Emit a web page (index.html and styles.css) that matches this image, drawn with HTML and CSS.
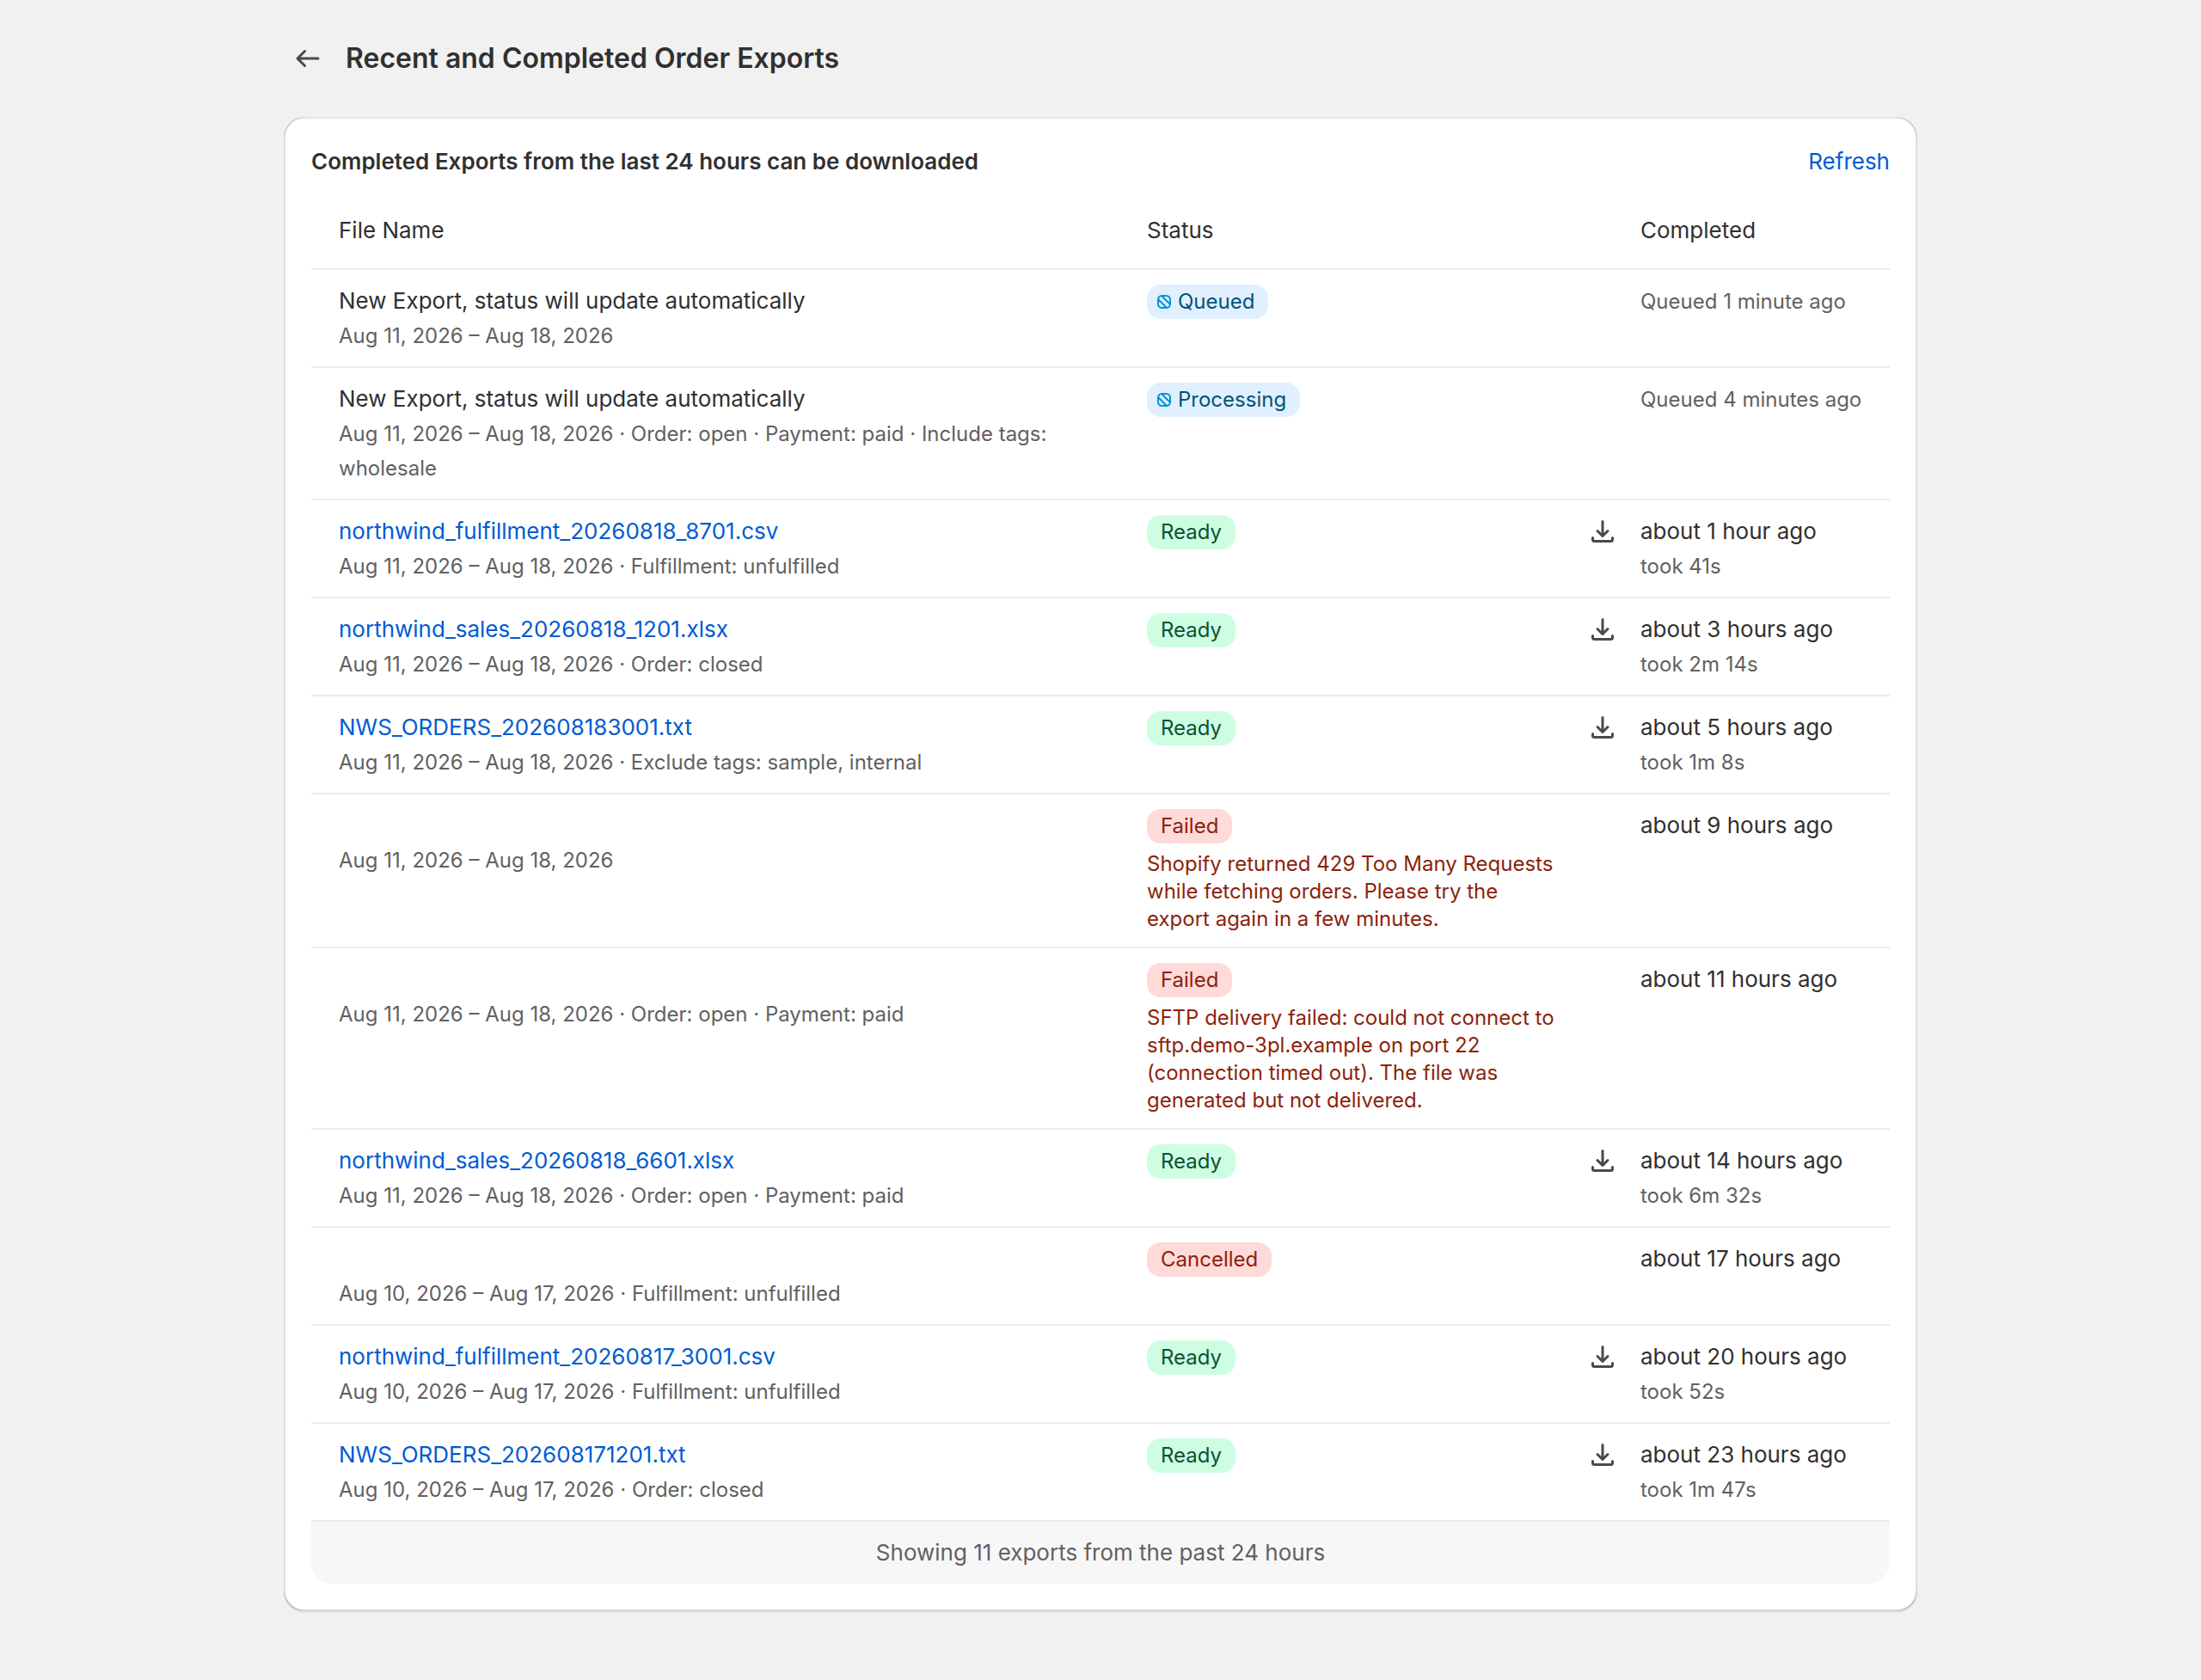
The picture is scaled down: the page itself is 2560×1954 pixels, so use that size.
FILE: index.html
```html
<!DOCTYPE html>
<html lang="en">
<head>
<meta charset="utf-8">
<meta name="viewport" content="width=device-width, initial-scale=1">
<title>Recent and Completed Order Exports</title>
<link rel="stylesheet" href="styles.css">
</head>
<body>
<svg class="sprite" aria-hidden="true">
  <symbol id="icon-download" viewBox="0 0 20 20">
    <path d="M10 4.25v8.25M7 9.75l3 3 3-3M4.25 13.75v1c0 .55.45 1 1 1h9.5c.55 0 1-.45 1-1v-1"/>
  </symbol>
  <symbol id="icon-progress" viewBox="0 0 16 16">
    <rect x="1" y="1" width="14" height="14" rx="4.5"/>
    <path d="M1.5 5.5l9 9M5.5 1.5l9 9"/>
  </symbol>
</svg>
<main class="page">
  <header class="page-header">
    <a class="back" href="#" aria-label="Back">
      <svg viewBox="0 0 20 20" aria-hidden="true"><path d="M16 10H4.5M8.25 5.75 4 10l4.25 4.25"/></svg>
    </a>
    <h1 class="page-title">Recent and Completed Order Exports</h1>
  </header>
  <section class="card">
    <div class="card-header">
      <h2 class="card-title">Completed Exports from the last 24 hours can be downloaded</h2>
      <button class="refresh" type="button">Refresh</button>
    </div>
    <table class="exports">
      <colgroup><col class="col-file"><col class="col-status"><col class="col-download"><col class="col-completed"></colgroup>
      <thead>
        <tr><th scope="col">File Name</th><th scope="col">Status</th><td></td><th scope="col">Completed</th></tr>
      </thead>
      <tbody>
        <tr>
          <td><p class="name">New Export, status will update automatically</p><p><span class="detail">Aug 11, 2026 – Aug 18, 2026</span></p></td>
          <td><span class="badge info"><svg aria-hidden="true"><use href="#icon-progress"/></svg>Queued</span></td>
          <td></td>
          <td><p><span class="detail">Queued 1 minute ago</span></p></td>
        </tr>
        <tr>
          <td><p class="name">New Export, status will update automatically</p><p><span class="detail">Aug 11, 2026 – Aug 18, 2026 · Order: open · Payment: paid · Include tags: wholesale</span></p></td>
          <td><span class="badge info"><svg aria-hidden="true"><use href="#icon-progress"/></svg>Processing</span></td>
          <td></td>
          <td><p><span class="detail">Queued 4 minutes ago</span></p></td>
        </tr>
        <tr>
          <td><p class="name"><a href="#">northwind_fulfillment_20260818_8701.csv</a></p><p><span class="detail">Aug 11, 2026 – Aug 18, 2026 · Fulfillment: unfulfilled</span></p></td>
          <td><span class="badge success">Ready</span></td>
          <td><a class="download" href="#" aria-label="Download"><svg aria-hidden="true"><use href="#icon-download"/></svg></a></td>
          <td><p class="name">about 1 hour ago</p><p><span class="detail">took 41s</span></p></td>
        </tr>
        <tr>
          <td><p class="name"><a href="#">northwind_sales_20260818_1201.xlsx</a></p><p><span class="detail">Aug 11, 2026 – Aug 18, 2026 · Order: closed</span></p></td>
          <td><span class="badge success">Ready</span></td>
          <td><a class="download" href="#" aria-label="Download"><svg aria-hidden="true"><use href="#icon-download"/></svg></a></td>
          <td><p class="name">about 3 hours ago</p><p><span class="detail">took 2m 14s</span></p></td>
        </tr>
        <tr>
          <td><p class="name"><a href="#">NWS_ORDERS_202608183001.txt</a></p><p><span class="detail">Aug 11, 2026 – Aug 18, 2026 · Exclude tags: sample, internal</span></p></td>
          <td><span class="badge success">Ready</span></td>
          <td><a class="download" href="#" aria-label="Download"><svg aria-hidden="true"><use href="#icon-download"/></svg></a></td>
          <td><p class="name">about 5 hours ago</p><p><span class="detail">took 1m 8s</span></p></td>
        </tr>
        <tr>
          <td><p class="name"></p><p><span class="detail">Aug 11, 2026 – Aug 18, 2026</span></p></td>
          <td><span class="badge critical">Failed</span><p class="error">Shopify returned 429 Too Many Requests while fetching orders. Please try the export again in a few minutes.</p></td>
          <td></td>
          <td><p class="name">about 9 hours ago</p></td>
        </tr>
        <tr>
          <td><p class="name"></p><p><span class="detail">Aug 11, 2026 – Aug 18, 2026 · Order: open · Payment: paid</span></p></td>
          <td><span class="badge critical">Failed</span><p class="error">SFTP delivery failed: could not connect to sftp.demo-3pl.example on port 22 (connection timed out). The file was generated but not delivered.</p></td>
          <td></td>
          <td><p class="name">about 11 hours ago</p></td>
        </tr>
        <tr>
          <td><p class="name"><a href="#">northwind_sales_20260818_6601.xlsx</a></p><p><span class="detail">Aug 11, 2026 – Aug 18, 2026 · Order: open · Payment: paid</span></p></td>
          <td><span class="badge success">Ready</span></td>
          <td><a class="download" href="#" aria-label="Download"><svg aria-hidden="true"><use href="#icon-download"/></svg></a></td>
          <td><p class="name">about 14 hours ago</p><p><span class="detail">took 6m 32s</span></p></td>
        </tr>
        <tr>
          <td><p class="name"></p><p><span class="detail">Aug 10, 2026 – Aug 17, 2026 · Fulfillment: unfulfilled</span></p></td>
          <td><span class="badge critical">Cancelled</span></td>
          <td></td>
          <td><p class="name">about 17 hours ago</p></td>
        </tr>
        <tr>
          <td><p class="name"><a href="#">northwind_fulfillment_20260817_3001.csv</a></p><p><span class="detail">Aug 10, 2026 – Aug 17, 2026 · Fulfillment: unfulfilled</span></p></td>
          <td><span class="badge success">Ready</span></td>
          <td><a class="download" href="#" aria-label="Download"><svg aria-hidden="true"><use href="#icon-download"/></svg></a></td>
          <td><p class="name">about 20 hours ago</p><p><span class="detail">took 52s</span></p></td>
        </tr>
        <tr>
          <td><p class="name"><a href="#">NWS_ORDERS_202608171201.txt</a></p><p><span class="detail">Aug 10, 2026 – Aug 17, 2026 · Order: closed</span></p></td>
          <td><span class="badge success">Ready</span></td>
          <td><a class="download" href="#" aria-label="Download"><svg aria-hidden="true"><use href="#icon-download"/></svg></a></td>
          <td><p class="name">about 23 hours ago</p><p><span class="detail">took 1m 47s</span></p></td>
        </tr>
      </tbody>
    </table>
    <p class="card-footer">Showing 11 exports from the past 24 hours</p>
  </section>
</main>
</body>
</html>
```

FILE: styles.css
```css
* {
  box-sizing: border-box;
}

body {
  margin: 0;
  background: #f1f1f1;
  color: #303030;
  font-family: Inter, "Liberation Sans", sans-serif;
  font-size: 26px;
  font-weight: 400;
  line-height: 40px;
}

h1, h2, p {
  margin: 0;
}

a {
  color: #005bd3;
  text-decoration: none;
}

.sprite {
  display: none;
}

.page {
  max-width: 1996px;
  margin: 0 auto;
  padding: 40px 48px 80px;
}

.page-header {
  display: flex;
  align-items: center;
  gap: 24px;
  padding-left: 8px;
  margin-bottom: 40px;
}

.back {
  display: flex;
  padding: 8px 0;
}

.back svg {
  width: 40px;
  height: 40px;
  fill: none;
  stroke: #4a4a4a;
  stroke-width: 1.5;
  stroke-linecap: round;
  stroke-linejoin: round;
}

.page-title {
  font-size: 32px;
  font-weight: 600;
  line-height: 40px;
}

.card {
  padding: 32px;
  border-radius: 24px;
  background: #fff;
  box-shadow:
    0 2px 0 rgba(26, 26, 26, 0.07),
    inset 2px 0 0 rgba(0, 0, 0, 0.13),
    inset -2px 0 0 rgba(0, 0, 0, 0.13),
    inset 0 -2px 0 rgba(0, 0, 0, 0.17),
    inset 0 2px 0 rgba(204, 204, 204, 0.5);
}

.card-header {
  display: flex;
  align-items: center;
  justify-content: space-between;
}

.card-title {
  font-size: 26px;
  font-weight: 600;
  line-height: 40px;
}

.refresh {
  padding: 0;
  border: 0;
  background: none;
  color: #005bd3;
  font: inherit;
  cursor: pointer;
}

.exports {
  width: 100%;
  margin-top: 16px;
  border-collapse: separate;
  border-spacing: 0;
  table-layout: fixed;
}

.col-status {
  width: 510px;
}

.col-download {
  width: 72px;
}

.col-completed {
  width: 314px;
}

.exports th,
.exports td {
  padding: 16px 0 16px 32px;
  border-bottom: 2px solid #ebebeb;
  text-align: left;
  vertical-align: top;
}

.exports th {
  padding-top: 24px;
  padding-bottom: 24px;
  font-weight: 400;
}

.exports tbody td:first-child {
  padding-right: 32px;
}

.exports tr > :last-child {
  padding-left: 24px;
}

.name {
  min-height: 40px;
}

.detail {
  color: #616161;
  font-size: 24px;
  line-height: 32px;
}

.badge {
  display: inline-flex;
  align-items: center;
  height: 40px;
  padding: 0 16px;
  border-radius: 16px;
  font-size: 24px;
}

.badge svg {
  width: 16px;
  height: 16px;
  margin: 0 8px 0 -4px;
  fill: none;
  stroke: #0094d5;
  stroke-width: 2;
}

.info {
  background: #e0f0ff;
  color: #00527c;
}

.success {
  background: #cdfee1;
  color: #0c5132;
}

.critical {
  background: #fedad9;
  color: #8e1f0b;
}

.error {
  margin-top: 8px;
  color: #8e1f0b;
  font-size: 24px;
  line-height: 32px;
}

.download {
  display: block;
  height: 40px;
}

.download svg {
  width: 40px;
  height: 40px;
  fill: none;
  stroke: #4a4a4a;
  stroke-width: 1.5;
  stroke-linecap: round;
  stroke-linejoin: round;
}

.card-footer {
  padding: 16px;
  border-radius: 0 0 24px 24px;
  background: #f7f7f7;
  color: #616161;
  text-align: center;
}
```
